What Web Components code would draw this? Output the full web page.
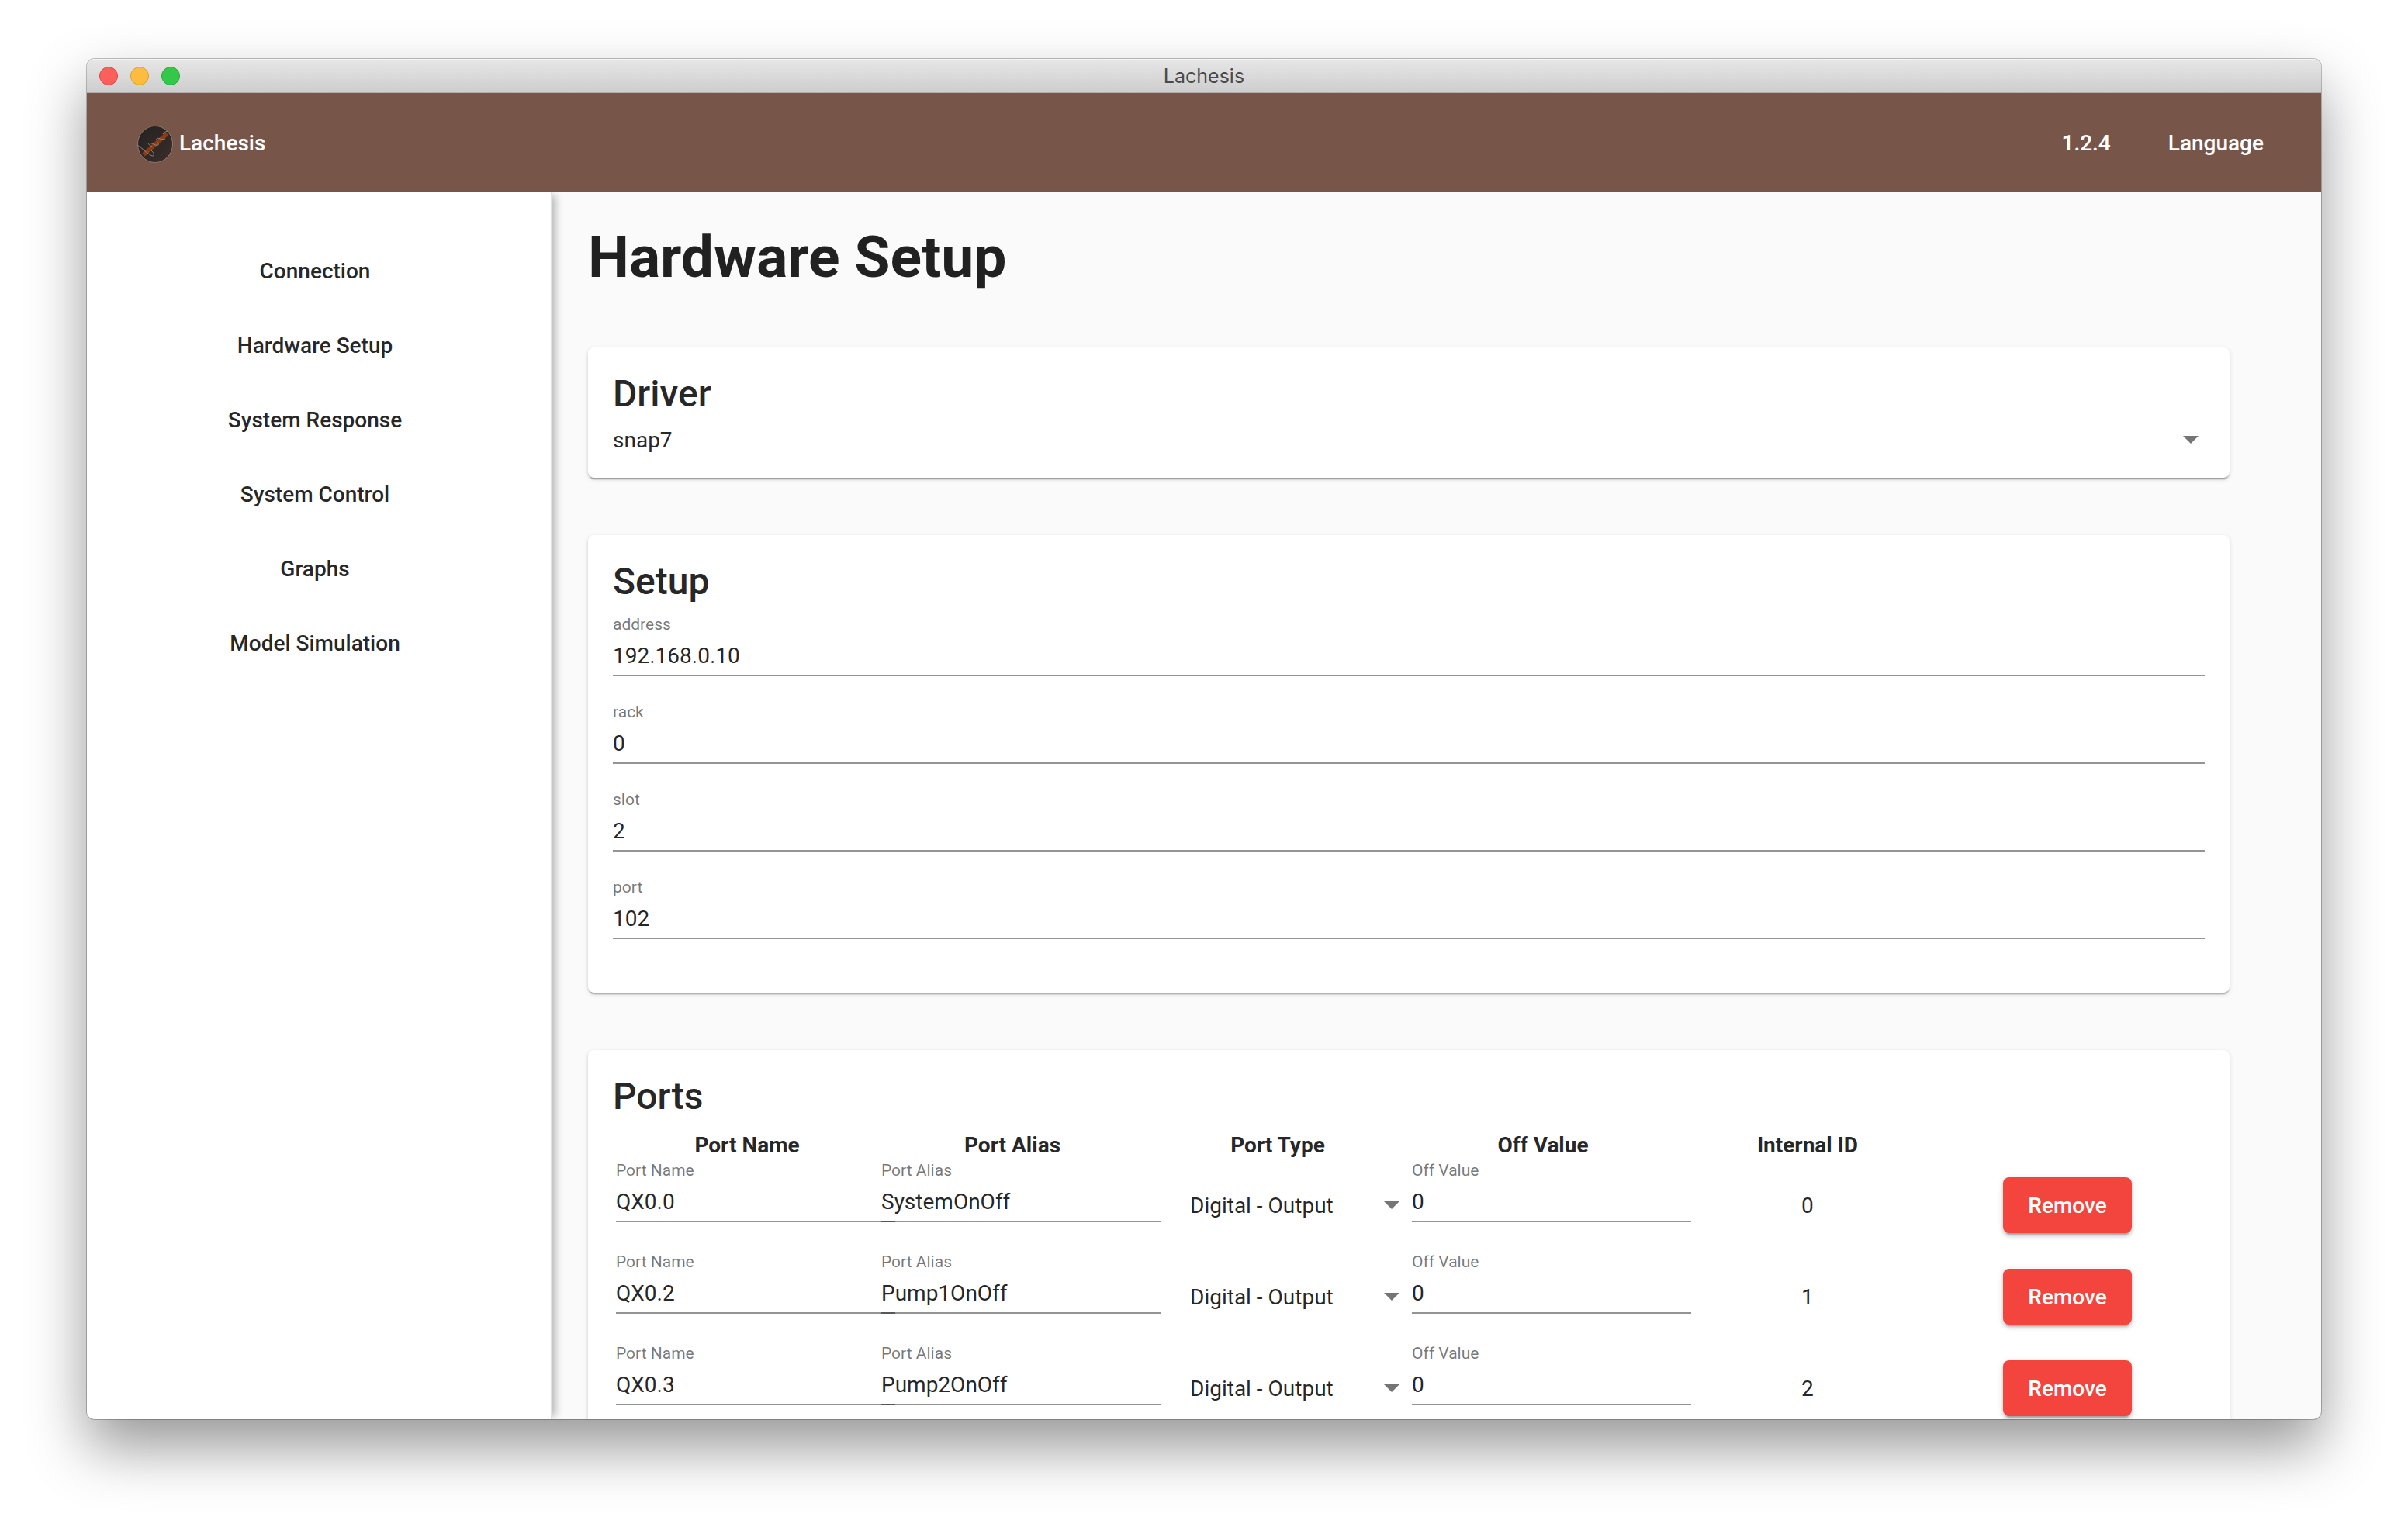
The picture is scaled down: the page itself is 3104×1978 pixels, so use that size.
<!DOCTYPE html>
<html lang="en">
<head>
<meta charset="utf-8">
<title>Lachesis</title>
<style>
  html, body { margin: 0; height: 100%; background: #fff; }
  body {
    box-sizing: border-box;
    padding: 76px 112px 148px;
    font: 400 28px/33px Roboto, "Liberation Sans", sans-serif;
    color: rgba(0, 0, 0, 0.87);
    overflow: hidden;
  }
</style>
</head>
<body>
<app-window heading="Lachesis">
  <app-header slot="header" name="Lachesis" version="1.2.4"></app-header>
  <side-nav slot="nav">
    <a href="#connection">Connection</a>
    <a href="#hardware">Hardware Setup</a>
    <a href="#response">System Response</a>
    <a href="#control">System Control</a>
    <a href="#graphs">Graphs</a>
    <a href="#simulation">Model Simulation</a>
  </side-nav>
  <page-view heading="Hardware Setup">
    <paper-card heading="Driver">
      <drop-select label="Driver" value="snap7"></drop-select>
    </paper-card>
    <paper-card heading="Setup">
      <field-stack>
        <text-field label="address" value="192.168.0.10"></text-field>
        <text-field label="rack" value="0"></text-field>
        <text-field label="slot" value="2"></text-field>
        <text-field label="port" value="102"></text-field>
      </field-stack>
    </paper-card>
    <paper-card heading="Ports">
      <ports-table></ports-table>
    </paper-card>
  </page-view>
</app-window>

<script>
const define = (name, render) => customElements.define(name, class extends HTMLElement {
  constructor() {
    super();
    this.attachShadow({ mode: 'open' });
  }
  connectedCallback() {
    if (!this.shadowRoot.firstChild) this.shadowRoot.innerHTML = render(this);
  }
});

define('app-window', el => `
  <style>
    :host {
      display: flex; flex-direction: column; height: 100%;
      border-radius: 10px; overflow: hidden; background: #fafafa;
      box-shadow: 0 0 0 1px rgba(0,0,0,.24), 0 36px 76px rgba(0,0,0,.41);
    }
    .bar {
      flex: none; box-sizing: border-box; height: 44px; padding: 1px 16px 0;
      display: grid; grid-template-columns: 1fr auto 1fr; align-items: center;
      background: linear-gradient(#e6e6e6, #cecece);
      border-top: 1px solid #f4f4f4; border-bottom: 2px solid #afafaf;
      font: 400 25px/30px Inter, "Liberation Sans", sans-serif; color: #4a4a4a;
    }
    .lights { display: flex; gap: 16px; }
    .lights button {
      box-sizing: border-box; width: 24px; height: 24px; padding: 0;
      border-radius: 50%; border: 1px solid var(--edge); background: var(--fill);
    }
    .close { --fill: #fc605c; --edge: #e2463f; }
    .min { --fill: #fdbc40; --edge: #dfa023; }
    .max { --fill: #34c84a; --edge: #24ab35; }
    .body { flex: 1; min-height: 0; display: flex; }
  </style>
  <div class="bar">
    <div class="lights">
      <button class="close" aria-label="Close"></button>
      <button class="min" aria-label="Minimize"></button>
      <button class="max" aria-label="Zoom"></button>
    </div>
    <span>${el.getAttribute('heading')}</span>
  </div>
  <slot name="header"></slot>
  <div class="body"><slot name="nav"></slot><slot></slot></div>`);

define('app-header', el => `
  <style>
    :host {
      flex: none; display: flex; align-items: center; justify-content: space-between;
      box-sizing: border-box; height: 128px; padding: 0 74px 0 64px;
      background: #785549; color: #fff; font-weight: 500; z-index: 2;
    }
    .brand, nav { display: flex; align-items: center; }
    .brand { gap: 7px; }
    nav { gap: 74px; }
    a { color: inherit; text-decoration: none; }
    svg { display: block; padding-top: 4px; }
  </style>
  <div class="brand">
    <svg width="48" height="48" viewBox="0 0 48 48" aria-hidden="true">
      <defs>
        <linearGradient id="disc" x1="0" y1="0" x2="1" y2="1">
          <stop offset="0" stop-color="#242221"/><stop offset="1" stop-color="#3a2d29"/>
        </linearGradient>
        <clipPath id="round"><ellipse cx="24" cy="24" rx="22.8" ry="23.8"/></clipPath>
      </defs>
      <ellipse cx="24" cy="24" rx="22.5" ry="23.5" fill="url(#disc)" stroke="#96847c" stroke-width="0.8"/>
      <g clip-path="url(#round)" fill="none">
        <path d="M9 37.5 39.5 10.5" stroke="#8b3c12" stroke-width="5.4"/>
        <path d="M1 25C7 29 12 34 17 37.500C20 39.500 23 39.500 22.500 37C22 35 20.500 33.500 19 32M20 27C17 26 14 23 16 22.500C20 22 25 26.500 28 25C29 24 28 22.500 27 21.500M26 18.500C25 17 26.500 16 29 16.500C32 17.500 34 18.500 37 17M34 11C35 9 37 8 40 7" stroke="#8f8782" stroke-width="1"/>
      </g>
    </svg>
    <span>${el.getAttribute('name')}</span>
  </div>
  <nav><span>${el.getAttribute('version')}</span><a href="#language">Language</a></nav>`);

define('side-nav', () => `
  <style>
    :host {
      flex: none; box-sizing: border-box; width: 600px; padding: 54px 10px 0 0;
      background: #fff; border-right: 2px solid #e0e0e0;
      box-shadow: 8px 0 10px -4px rgba(0,0,0,.28); z-index: 1;
    }
    nav { display: flex; flex-direction: column; align-items: center; }
    ::slotted(a) { line-height: 96px; font-weight: 500; color: rgba(0,0,0,.87); text-decoration: none; }
  </style>
  <nav><slot></slot></nav>`);

define('page-view', el => `
  <style>
    :host {
      flex: 1; min-width: 0; box-sizing: border-box; overflow: hidden;
      display: flex; flex-direction: column; gap: 74px; padding: 40px 118px 0 46px;
    }
    h1 { margin: 0; font-size: 75px; line-height: 86px; font-weight: 700; }
  </style>
  <h1>${el.getAttribute('heading')}</h1>
  <slot></slot>`);

define('paper-card', el => `
  <style>
    :host {
      display: block; flex: none; padding: 32px; border-radius: 8px; background: #fff;
      box-shadow: 0 4px 2px -2px rgba(0,0,0,.2), 0 2px 2px rgba(0,0,0,.14), 0 2px 6px rgba(0,0,0,.12);
    }
    h2 { margin: 0 0 15px; font-size: 48px; line-height: 56px; font-weight: 500; }
  </style>
  <h2>${el.getAttribute('heading')}</h2>
  <slot></slot>`);

define('field-stack', () => `
  <style>
    :host { display: flex; flex-direction: column; gap: 34px; padding-bottom: 37px; }
  </style>
  <slot></slot>`);

define('text-field', el => `
  <style>
    :host { display: block; }
    label { display: block; font-size: 21px; line-height: 24px; color: rgba(0,0,0,.54); }
    input {
      display: block; box-sizing: border-box; width: 100%; height: 55px; margin: 0;
      padding: 12px 0 8px; border: 0; border-bottom: 2px solid rgba(0,0,0,.42);
      border-radius: 0; outline: 0; background: none; font: inherit; color: inherit;
    }
  </style>
  <label for="f">${el.getAttribute('label')}</label>
  <input id="f" type="text" value="${el.getAttribute('value')}">`);

define('drop-select', el => `
  <style>
    :host { display: grid; align-items: center; }
    select, svg { grid-area: 1 / 1; }
    select {
      appearance: none; width: 100%; height: 33px; margin: 0; padding: 0 48px 0 0;
      border: 0; outline: 0; background: none; font: inherit; color: inherit;
    }
    svg { justify-self: end; margin-right: 8px; pointer-events: none; }
  </style>
  <select aria-label="${el.getAttribute('label')}"><option>${el.getAttribute('value')}</option></select>
  <svg width="20" height="11" viewBox="0 0 20 11" aria-hidden="true"><path d="M0 0h20L10 10z" fill="#757575"/></svg>`);

define('action-button', () => `
  <style>
    :host { display: inline-block; }
    button {
      display: block; height: 72px; padding: 0 32px; border: 0; border-radius: 8px;
      background: #f3453d; color: #fff; font: inherit; font-weight: 500;
      box-shadow: 0 6px 2px -4px rgba(0,0,0,.2), 0 4px 4px rgba(0,0,0,.14), 0 2px 10px rgba(0,0,0,.12);
    }
  </style>
  <button type="button"><slot></slot></button>`);

const ports = [
  ['QX0.0', 'SystemOnOff', 'Digital - Output', 0],
  ['QX0.2', 'Pump1OnOff', 'Digital - Output', 0],
  ['QX0.3', 'Pump2OnOff', 'Digital - Output', 0],
];

define('ports-table', () => `
  <style>
    :host { display: block; }
    table { width: 100%; table-layout: fixed; border-spacing: 4px; }
    col { width: 16.7%; }
    col.id { width: 16.6%; }
    col.action { width: auto; }
    th { padding: 0; height: 32px; line-height: 32px; font-weight: 700; }
    td { padding: 0; height: 114px; text-align: center; vertical-align: middle; }
    td.field { text-align: left; vertical-align: top; }
    td.type { padding: 0 4px 0 56px; }
    td.action { padding-right: 10px; }
    text-field { width: 360px; }
    action-button { vertical-align: middle; }
  </style>
  <table>
    <colgroup><col span="4"><col class="id"><col class="action"></colgroup>
    <thead><tr>
      <th>Port Name</th><th>Port Alias</th><th>Port Type</th><th>Off Value</th><th>Internal ID</th><th></th>
    </tr></thead>
    <tbody>${ports.map(([name, alias, type, off], id) => `
      <tr>
        <td class="field"><text-field label="Port Name" value="${name}"></text-field></td>
        <td class="field"><text-field label="Port Alias" value="${alias}"></text-field></td>
        <td class="type"><drop-select label="Port Type" value="${type}"></drop-select></td>
        <td class="field"><text-field label="Off Value" value="${off}"></text-field></td>
        <td>${id}</td>
        <td class="action"><action-button>Remove</action-button></td>
      </tr>`).join('')}
    </tbody>
  </table>`);
</script>
</body>
</html>
